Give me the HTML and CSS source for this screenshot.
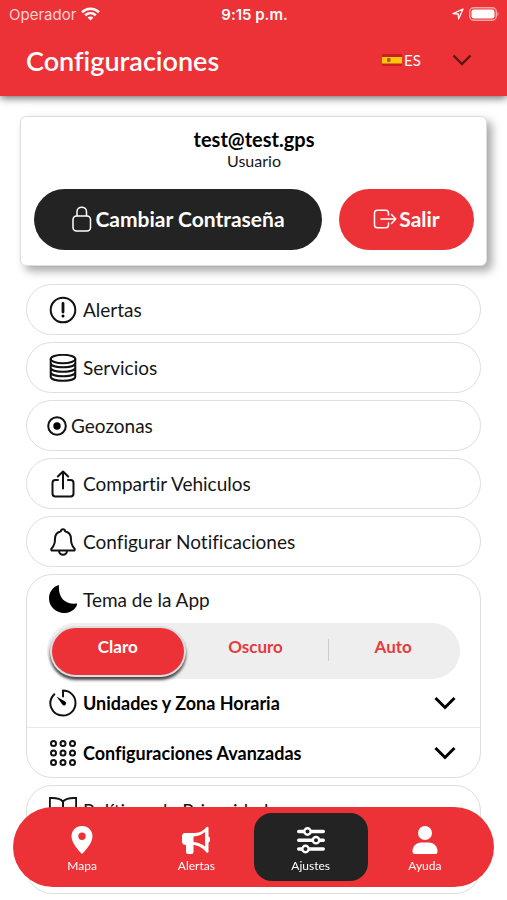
FILE: index.html
```html
<!DOCTYPE html>
<html lang="es">
<head>
    <meta charset="UTF-8">
    <meta name="viewport" content="width=device-width, initial-scale=1.0">
    <title>Configuraciones</title>
    <link rel="stylesheet" href="styles.css">
</head>
<body>

    <header class="header">
        <div class="status-bar">
            <div class="status-left">
                <span>Operador</span>
                <svg width="19" height="14" viewBox="0 0 19 14" fill="none" stroke="#fff" stroke-width="2.6">
                    <path d="M1 5.2C5.8 0.600 13.200 0.600 18 5.200M4.200 8.300C7.300 5.500 11.700 5.500 14.800 8.300"/>
                    <path d="M9.500 13.600 6.600 10.600C8.200 9.200 10.800 9.200 12.400 10.600Z" fill="#fff" stroke="none"/>
                </svg>
            </div>
            <strong class="status-time">9:15 p.m.</strong>
            <div class="status-right">
                <svg width="12" height="12" viewBox="0 0 12 12" fill="none" stroke="#fff" stroke-width="1.3" stroke-linejoin="round">
                    <path d="M1 5.600 11 1 6.600 11 6.200 6Z"/>
                </svg>
                <svg width="31" height="14" viewBox="0 0 31 14">
                    <rect x="0.700" y="0.700" width="26.600" height="12.600" rx="4" fill="none" stroke="#f8a5a7" stroke-width="1.400"/>
                    <rect x="2.500" y="2.500" width="23" height="9" rx="2.200" fill="#fff"/>
                    <path d="M28.500 4.500Q30.500 7 28.500 9.500Z" fill="#f8a5a7"/>
                </svg>
            </div>
        </div>
        <div class="title-bar">
            <h1>Configuraciones</h1>
            <div class="language">
                <svg class="flag" width="20" height="12" viewBox="0 0 20 12">
                    <rect width="20" height="12" rx="1" fill="#c8201c"/>
                    <rect y="3" width="20" height="6.500" fill="#fdc50c"/>
                    <rect x="5" y="4" width="3.500" height="4" rx="1" fill="#a8582a"/>
                </svg>
                <select class="language-select" aria-label="Idioma">
                    <option>ES</option>
                </select>
                <svg class="language-arrow" width="20" height="12" viewBox="0 0 20 12" fill="none" stroke="#5f1416" stroke-width="2.400">
                    <path d="M1.500 1.500 10 10 18.500 1.500"/>
                </svg>
            </div>
        </div>
    </header>

    <main class="content">
        <section class="profile">
            <h2>test@test.gps</h2>
            <p>Usuario</p>
            <div class="profile-buttons">
                <button type="button" class="btn btn-dark">
                    <svg width="22" height="26" viewBox="0 0 22 26" fill="none" stroke="#fff" stroke-width="1.500">
                        <rect x="2" y="10" width="17.500" height="15" rx="3.500"/>
                        <path d="M6 10V5.800C6 -0.200 15.500 -0.200 15.500 5.800V10"/>
                    </svg>
                    Cambiar Contraseña
                </button>
                <button type="button" class="btn btn-red">
                    <svg width="24" height="20" viewBox="0 0 24 20" fill="none" stroke="#fff" stroke-width="1.500" stroke-linecap="round" stroke-linejoin="round">
                        <path d="M15.500 6V4Q15.500 1.200 12.700 1.200H4.300Q1.500 1.200 1.500 4V16Q1.500 18.800 4.300 18.800H12.700Q15.500 18.800 15.500 16V14M8 10H22.500M18.500 5.500 22.800 10 18.500 14.500"/>
                    </svg>
                    Salir
                </button>
            </div>
        </section>

        <nav class="menu">
            <a class="item" href="#">
                <svg class="icon" viewBox="0 0 28 28">
                    <circle cx="14" cy="14" r="12.300"/>
                    <path d="M14 7.500V16" stroke-width="2.800"/>
                    <circle cx="14" cy="20" r="1.500" class="solid"/>
                </svg>
                Alertas
            </a>
            <a class="item" href="#">
                <svg class="icon" viewBox="0 0 28 28">
                    <ellipse cx="14" cy="5" rx="12.300" ry="4.200"/>
                    <path d="M1.700 5V22.500C1.700 28.300 26.300 28.300 26.300 22.500V5M1.700 9C1.700 14.800 26.300 14.800 26.300 9M1.700 13.500C1.700 19.300 26.300 19.300 26.300 13.500M1.700 18C1.700 23.800 26.300 23.800 26.300 18"/>
                </svg>
                Servicios
            </a>
            <a class="item item-compact" href="#">
                <svg class="icon icon-small" viewBox="0 0 20 20">
                    <circle cx="10" cy="10" r="8.800"/>
                    <circle cx="10" cy="10" r="3.700" class="solid"/>
                </svg>
                Geozonas
            </a>
            <a class="item" href="#">
                <svg class="icon" viewBox="0 0 28 28">
                    <path d="M9 10H6.500Q3.500 10 3.500 13V23.500Q3.500 26.500 6.500 26.500H21.500Q24.500 26.500 24.500 23.500V13Q24.500 10 21.500 10H19M14 18.500V2M8.800 6.500 14 1.500 19.200 6.500"/>
                </svg>
                Compartir Vehiculos
            </a>
            <a class="item" href="#">
                <svg class="icon" viewBox="0 0 28 28">
                    <path d="M14 1.300C12.600 1.300 12 2.200 11.800 3.200C7.700 4.200 6 7.500 6 11C6 17 4.500 18.300 2.600 20.400C1.700 21.600 2.300 22.600 3.600 22.600H24.400C25.700 22.600 26.300 21.600 25.400 20.400C23.500 18.300 22 17 22 11C22 7.500 20.300 4.200 16.200 3.200C16 2.200 15.400 1.300 14 1.300ZM10 22.600C10 28.200 18 28.200 18 22.600"/>
                </svg>
                Configurar Notificaciones
            </a>

            <section class="group">
                <div class="group-row">
                    <svg class="icon" viewBox="0 0 28 28">
                        <path class="solid" d="M10 0C9 12 15 20 28.500 18.500C27 24 21.500 28 15 28C7 28 0 21.500 0 13.500C0 7 4 1.500 10 0Z"/>
                    </svg>
                    Tema de la App
                </div>
                <div class="segment" role="radiogroup" aria-label="Tema de la App">
                    <label class="segment-option"><input type="radio" name="theme" checked><span>Claro</span></label>
                    <label class="segment-option"><input type="radio" name="theme"><span>Oscuro</span></label>
                    <label class="segment-option segment-divided"><input type="radio" name="theme"><span>Auto</span></label>
                </div>
                <button type="button" class="accordion">
                    <svg class="icon" viewBox="0 0 28 28">
                        <path d="M5.300 5.300C-3 14 3 26.500 14 26.500C21 26.500 26.500 21 26.500 14C26.500 7 21 1.500 14 1.500V7.500"/>
                        <path class="solid" d="M7.500 7.500 16.500 12.800A2.100 2.100 0 1 1 13.300 15.500Z"/>
                    </svg>
                    <span>Unidades y Zona Horaria</span>
                    <svg class="chevron" viewBox="0 0 22 14"><path d="M1.500 2 11 11.500 20.500 2"/></svg>
                </button>
                <button type="button" class="accordion">
                    <svg class="icon icon-grid" viewBox="0 0 28 28">
                        <circle cx="4.500" cy="4.500" r="2.500"/><circle cx="14" cy="4.500" r="2.500"/><circle cx="23.500" cy="4.500" r="2.500"/>
                        <circle cx="4.500" cy="14" r="2.500"/><circle cx="14" cy="14" r="2.500"/><circle cx="23.500" cy="14" r="2.500"/>
                        <circle cx="4.500" cy="23.500" r="2.500"/><circle cx="14" cy="23.500" r="2.500"/><circle cx="23.500" cy="23.500" r="2.500"/>
                    </svg>
                    <span>Configuraciones Avanzadas</span>
                    <svg class="chevron" viewBox="0 0 22 14"><path d="M1.500 2 11 11.500 20.500 2"/></svg>
                </button>
            </section>

            <section class="group group-legal">
                <a class="group-row" href="#">
                    <svg class="icon" viewBox="0 0 28 28">
                        <path d="M14 5.500C11 2 6 1.700 0.800 2V23C6 22.500 11 23 14 26C17 23 22 22.500 27.200 23V2C22 1.700 17 2 14 5.500ZM14 5.500V26"/>
                    </svg>
                    Políticas de Privacidad
                </a>
            </section>
        </nav>
    </main>

    <nav class="tab-bar">
        <a class="tab" href="#">
            <svg width="28" height="28" viewBox="0 0 28 28" fill="#fff">
                <path fill-rule="evenodd" d="M14 0C7.800 0 3.500 4.500 3.500 10.300C3.500 16.500 9.500 23.500 14 28C18.500 23.500 24.500 16.500 24.500 10.300C24.500 4.500 20.200 0 14 0ZM14 6.500A3.700 3.700 0 1 1 14 13.900A3.700 3.700 0 1 1 14 6.500Z"/>
            </svg>
            Mapa
        </a>
        <a class="tab" href="#">
            <svg width="28" height="28" viewBox="0 0 28 28" fill="#fff">
                <path fill-rule="evenodd" d="M3 7H13C18 7 22 4 24 1.500C25 0.300 26.500 0.500 26.500 2V10.500C29 11.500 29 15.500 26.500 16.500V25.500C26.500 27 25 27.200 24 26C21.500 22.500 17 19.500 11.500 19V26Q11.500 28 9.500 28H6Q4 28 4 26V19Q0 19 0 15.500V10.500Q0 7 3 7ZM11.500 10.500V16C16 16.300 20 18 23 20.500V6C20 8.700 16 10.300 11.500 10.500Z"/>
            </svg>
            Alertas
        </a>
        <a class="tab tab-active" href="#">
            <svg width="28" height="28" viewBox="0 0 28 28" fill="#232323" stroke="#fff" stroke-width="3.400" stroke-linecap="round">
                <path d="M1.700 5.500H26.300M1.700 14.200H26.300M1.700 23H26.300"/>
                <circle cx="10.500" cy="5.500" r="3.200" stroke-width="2.400"/>
                <circle cx="19" cy="14.200" r="3.200" stroke-width="2.400"/>
                <circle cx="8.500" cy="23" r="3.200" stroke-width="2.400"/>
            </svg>
            Ajustes
        </a>
        <a class="tab" href="#">
            <svg width="28" height="28" viewBox="0 0 28 28" fill="#fff">
                <circle cx="14" cy="7" r="7"/>
                <path d="M1.500 25.500C1.500 20 5.500 16.500 10 16.500H18C22.500 16.500 26.500 20 26.500 25.500Q26.500 28 24.500 28H3.500Q1.500 28 1.500 25.500Z"/>
            </svg>
            Ayuda
        </a>
    </nav>

</body>
</html>
```

FILE: styles.css
```css
* {
    box-sizing: border-box;
}

body {
    margin: 0;
    font-family: Lato, sans-serif;
    font-size: 19px;
    font-variant-ligatures: none;
    color: #161616;
    background-color: #fff;
}

a {
    color: inherit;
    text-decoration: none;
}

button,
select {
    font: inherit;
    font-variant-ligatures: none;
    color: inherit;
    border: none;
    cursor: pointer;
}

svg {
    flex-shrink: 0;
}

.header {
    background-color: #ec3237;
    color: #fff;
    box-shadow: 0 2px 8px rgba(0, 0, 0, 0.6);
}

.status-bar {
    display: grid;
    grid-template-columns: 1fr auto 1fr;
    align-items: center;
    height: 28px;
    padding: 0 7px 0 9px;
    font-family: Inter, sans-serif;
    font-size: 15px;
}

.status-left,
.status-right {
    display: flex;
    align-items: center;
    gap: 5px;
}

.status-left {
    color: #fbd3d4;
}

.status-right {
    justify-content: flex-end;
}

.status-time {
    font-weight: 600;
}

.title-bar {
    display: flex;
    align-items: center;
    justify-content: space-between;
    height: 68px;
    padding: 0 35px 4px 26px;
}

h1 {
    margin: 0;
    font-size: 27px;
    font-weight: 600;
}

.language {
    display: grid;
    grid-template-columns: 22px 68px;
    align-items: center;
}

.language-select {
    grid-area: 1 / 2;
    padding: 0;
    appearance: none;
    background: none;
    font-size: 15px;
}

.language-arrow {
    grid-area: 1 / 2;
    justify-self: end;
    pointer-events: none;
}

.content {
    padding: 20px 20px 7px;
}

.profile {
    padding: 10px 12px 15px 13px;
    text-align: center;
    background-color: #fff;
    border: 1px solid #ddd;
    border-radius: 6px;
    box-shadow: 5px 5px 10px rgba(0, 0, 0, 0.35);
}

.profile h2 {
    margin: 0;
    font-size: 20px;
    line-height: 24px;
    color: #000;
}

.profile p {
    margin: 0;
    font-size: 16px;
    line-height: 20px;
}

.profile-buttons {
    display: grid;
    grid-template-columns: 32fr 15fr;
    gap: 17px;
    margin-top: 18px;
}

.btn {
    display: flex;
    align-items: center;
    justify-content: center;
    gap: 2px;
    height: 61px;
    padding: 0 0 2px;
    border-radius: 31px;
    font-size: 21px;
    font-weight: bold;
    color: #fff;
}

.btn-dark {
    background-color: #232323;
}

.btn-red {
    background-color: #ec3237;
}

.menu {
    display: flex;
    flex-direction: column;
    gap: 7px;
    margin: 18px 6px 0;
}

.item,
.group-row,
.accordion {
    display: flex;
    align-items: center;
    gap: 6px;
    padding: 0 22px;
}

.item {
    height: 51px;
    border: 1px solid #dedede;
    border-radius: 26px;
}

.item-compact {
    gap: 4px;
    padding-left: 20px;
}

.icon {
    width: 28px;
    height: 28px;
    fill: none;
    stroke: #111;
    stroke-width: 2;
    stroke-linecap: round;
    stroke-linejoin: round;
}

.icon-small {
    width: 20px;
    height: 20px;
}

.icon .solid {
    fill: #000;
    stroke: none;
}

.group {
    border: 1px solid #dedede;
    border-radius: 26px;
}

.group-row {
    height: 48px;
}

.segment {
    display: grid;
    grid-template-columns: repeat(3, 1fr);
    height: 56px;
    margin: 0 20px;
    background-color: #eee;
    border-radius: 28px;
    font-size: 17px;
    font-weight: bold;
    color: #e23b40;
}

.segment-option {
    display: flex;
    padding: 5px 1px 4px 5px;
    cursor: pointer;
}

.segment-option input {
    appearance: none;
    width: 0;
    margin: 0;
}

.segment-option span {
    flex: 1;
    padding-top: 8px;
    line-height: 22px;
    text-align: center;
    border-radius: 24px;
}

.segment-option input:checked + span {
    color: #fff;
    background-color: #ec3237;
    box-shadow: 0 0 0 2px #ddd, 0 3px 3px 2px rgba(0, 0, 0, 0.7);
}

.segment-divided {
    background: linear-gradient(#ccc, #ccc) 6px 16px / 1px 22px no-repeat;
}

.accordion {
    width: 100%;
    height: 48px;
    background: none;
    font-size: 18px;
    font-weight: bold;
    color: #000;
    text-align: left;
}

.accordion span {
    flex: 1;
}

.accordion + .accordion {
    height: 50px;
    border-top: 1px solid #e8e8e8;
}

.chevron {
    width: 22px;
    height: 14px;
    margin-right: 2px;
    fill: none;
    stroke: #000;
    stroke-width: 3;
}

.group-legal {
    min-height: 109px;
}

.tab-bar {
    position: fixed;
    right: 13px;
    bottom: 13px;
    left: 13px;
    display: grid;
    grid-template-columns: repeat(4, 1fr);
    padding: 6px 12px;
    background-color: #ec3237;
    border-radius: 40px;
}

.tab {
    display: flex;
    flex-direction: column;
    align-items: center;
    gap: 4px;
    height: 68px;
    padding-top: 13px;
    border-radius: 18px;
    font-size: 12px;
    line-height: 16px;
    color: #fff;
}

.tab-active {
    background-color: #232323;
}
```
